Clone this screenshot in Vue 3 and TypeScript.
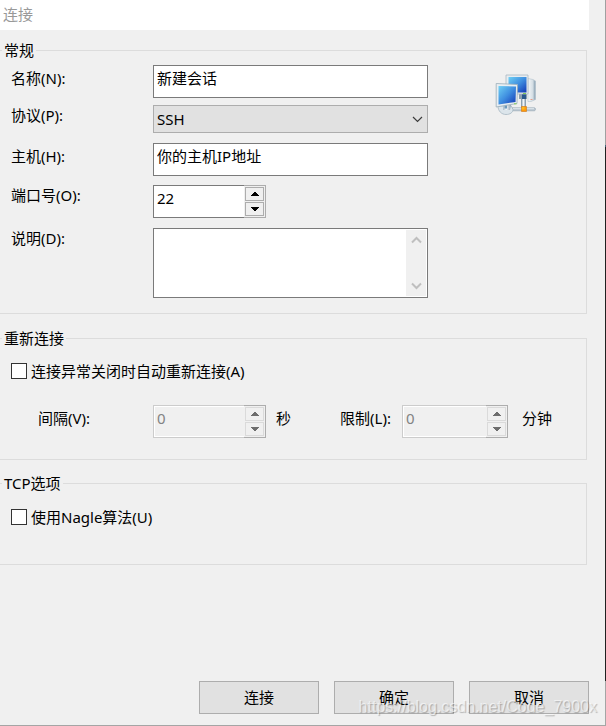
<script setup lang="ts">
import { ref } from 'vue'

const sessionName = ref('新建会话')
const protocol = ref('SSH')
const host = ref('你的主机IP地址')
const port = ref(22)
const description = ref('')
const autoReconnect = ref(false)
const interval = ref(0)
const limit = ref(0)
const useNagle = ref(false)

const protocols: string[] = ['SSH', 'TELNET', 'RLOGIN', 'SFTP', 'FTP', 'SERIAL']
const actions: string[] = ['连接', '确定', '取消']

function stepPort(delta: number): void {
  port.value = Math.min(65535, Math.max(1, port.value + delta))
}
function stepInterval(delta: number): void {
  interval.value = Math.max(0, interval.value + delta)
}
function stepLimit(delta: number): void {
  limit.value = Math.max(0, limit.value + delta)
}
</script>

<template>
  <div class="window">
    <main class="dialog">
      <header class="titlebar">连接</header>

      <form class="body" @submit.prevent>
        <fieldset class="group general">
          <legend>常规</legend>
          <div class="general-layout">
            <div class="fields">
              <div class="row row-text">
                <label for="name">名称(N):</label>
                <input id="name" v-model="sessionName" class="box" type="text" />
              </div>
              <div class="row row-select">
                <label for="protocol">协议(P):</label>
                <div class="select">
                  <select id="protocol" v-model="protocol">
                    <option v-for="p in protocols" :key="p">{{ p }}</option>
                  </select>
                  <svg width="11" height="7" viewBox="0 0 11 7" aria-hidden="true">
                    <path d="M1 1 5.500 5.500 10 1" fill="none" stroke="#3c3c3c" stroke-width="1.2" />
                  </svg>
                </div>
              </div>
              <div class="row row-text">
                <label for="host">主机(H):</label>
                <input id="host" v-model="host" class="box" type="text" />
              </div>
              <div class="row row-port">
                <label for="port">端口号(O):</label>
                <div class="spin">
                  <input id="port" v-model.number="port" type="text" inputmode="numeric" />
                  <div class="steps">
                    <button type="button" aria-label="增加" @click="stepPort(1)">
                      <svg width="8" height="4" viewBox="0 0 8 4"><path d="M3 0h2v1h1v1h1v1h1v1H0V3h1V2h1V1h1z" /></svg>
                    </button>
                    <button type="button" aria-label="减少" @click="stepPort(-1)">
                      <svg width="8" height="4" viewBox="0 0 8 4"><path d="M0 0h8v1H7v1H6v1H5v1H3V3H2V2H1V1H0z" /></svg>
                    </button>
                  </div>
                </div>
              </div>
              <div class="row">
                <label for="description">说明(D):</label>
                <div class="memo">
                  <textarea id="description" v-model="description"></textarea>
                  <div class="scroll" aria-hidden="true">
                    <svg width="11" height="8" viewBox="0 0 11 8"><path d="M1 6.500 5.500 2 10 6.500" /></svg>
                    <svg width="11" height="8" viewBox="0 0 11 8"><path d="M1 1.500 5.500 6 10 1.500" /></svg>
                  </div>
                </div>
              </div>
            </div>

            <svg class="network" width="42" height="42" viewBox="0 0 42 42" aria-hidden="true">
              <defs>
                <linearGradient id="screen" x1="0" y1="0" x2="1" y2="1">
                  <stop offset="0" stop-color="#6fd0f4" />
                  <stop offset="0.5" stop-color="#3f8ee0" />
                  <stop offset="1" stop-color="#1238b4" />
                </linearGradient>
                <linearGradient id="tower" x1="0" y1="0" x2="1" y2="0">
                  <stop offset="0" stop-color="#f4f7f9" />
                  <stop offset="0.65" stop-color="#d3dde4" />
                  <stop offset="1" stop-color="#7e97aa" />
                </linearGradient>
                <linearGradient id="stand" x1="0" y1="0" x2="1" y2="0">
                  <stop offset="0" stop-color="#a9bac7" />
                  <stop offset="0.4" stop-color="#f5f8fa" />
                  <stop offset="1" stop-color="#8da1b1" />
                </linearGradient>
              </defs>
              <path d="M33 4.500 38 5.500 40.500 7v18.500L36 27.500h-3z" fill="url(#tower)" stroke="#b4c2cc" stroke-width="0.6" />
              <path d="M35.500 25.500h2" stroke="#e69a86" />
              <path d="M24 19h8v6h-1v10h-5V25h-2z" fill="#8b9fb0" />
              <path d="M27 19h4v6h-4z" fill="#2a5a8c" />
              <path d="M27 25h3.500v11H27z" fill="url(#stand)" />
              <path d="M11 1h22v19H11z" fill="#e8edf0" stroke="#a9b8c3" stroke-width="0.8" />
              <path d="M13.500 3h18v15.500h-18z" fill="url(#screen)" />
              <path d="M28 19.500h3" stroke="#80cc53" />
              <path d="M17 33.800h22c1 0 1.500.5 1.500 1.400S40 36.800 39 36.800H17z" fill="#b9c6cf" stroke="#93a4b1" stroke-width="0.6" />
              <path d="M18 34.700h21" stroke="#edf2f5" stroke-width="0.8" />
              <path d="M26.500 32.500h5v5h-5z" fill="#ff9b0b" stroke="#cf781d" stroke-width="0.6" />
              <path d="M27 33h2.500v2.500H27z" fill="#ffba1c" />
              <path d="M3 32c0 5 3.500 8.500 8 8.500 4 0 7-2 7-5l-2-4z" fill="#dce5eb" stroke="#a6b6c1" stroke-width="0.8" />
              <path d="M8 31h8l-1 5H8z" fill="url(#stand)" />
              <path d="M9.500 31h2.500v3.500H9.500z" fill="#6d98ba" />
              <path d="M1.200 9.500 22.500 10.500 22 29.500 1.200 33z" fill="#e8eef2" stroke="#9badb9" stroke-width="0.8" />
              <path d="M3.500 12 21 12.500 20.500 28 3.500 30.500z" fill="url(#screen)" />
              <path d="M19 29.800h2.500" stroke="#80cc53" />
            </svg>
          </div>
        </fieldset>

        <fieldset class="group reconnect">
          <legend>重新连接</legend>
          <label class="check">
            <input v-model="autoReconnect" type="checkbox" />
            连接异常关闭时自动重新连接(A)
          </label>
          <div class="timing">
            <label class="interval-label" for="interval">间隔(V):</label>
            <div class="spin" :class="{ off: !autoReconnect }">
              <input id="interval" v-model.number="interval" type="text" inputmode="numeric" :disabled="!autoReconnect" />
              <div class="steps">
                <button type="button" aria-label="增加间隔" :disabled="!autoReconnect" @click="stepInterval(1)">
                  <svg width="8" height="4" viewBox="0 0 8 4"><path d="M3 0h2v1h1v1h1v1h1v1H0V3h1V2h1V1h1z" /></svg>
                </button>
                <button type="button" aria-label="减少间隔" :disabled="!autoReconnect" @click="stepInterval(-1)">
                  <svg width="8" height="4" viewBox="0 0 8 4"><path d="M0 0h8v1H7v1H6v1H5v1H3V3H2V2H1V1H0z" /></svg>
                </button>
              </div>
            </div>
            <span class="seconds">秒</span>
            <label class="limit-label" for="limit">限制(L):</label>
            <div class="spin narrow" :class="{ off: !autoReconnect }">
              <input id="limit" v-model.number="limit" type="text" inputmode="numeric" :disabled="!autoReconnect" />
              <div class="steps">
                <button type="button" aria-label="增加限制" :disabled="!autoReconnect" @click="stepLimit(1)">
                  <svg width="8" height="4" viewBox="0 0 8 4"><path d="M3 0h2v1h1v1h1v1h1v1H0V3h1V2h1V1h1z" /></svg>
                </button>
                <button type="button" aria-label="减少限制" :disabled="!autoReconnect" @click="stepLimit(-1)">
                  <svg width="8" height="4" viewBox="0 0 8 4"><path d="M0 0h8v1H7v1H6v1H5v1H3V3H2V2H1V1H0z" /></svg>
                </button>
              </div>
            </div>
            <span class="minutes">分钟</span>
          </div>
        </fieldset>

        <fieldset class="group tcp">
          <legend>TCP选项</legend>
          <label class="check">
            <input v-model="useNagle" type="checkbox" />
            使用Nagle算法(U)
          </label>
        </fieldset>

        <footer class="actions">
          <button v-for="a in actions" :key="a" type="button">{{ a }}</button>
        </footer>
      </form>
    </main>
    <div class="edge"></div>
    <div class="watermark">https://blog.csdn.net/Code_7900x</div>
  </div>
</template>

<style>
body {
  background: #f0f0f0;
}
</style>

<style scoped>
* {
  box-sizing: border-box;
}
.window {
  position: relative;
  display: flex;
  min-height: 100vh;
  background: #f0f0f0;
  color: #000;
  font: 15px/20px "Noto Sans", "Noto Sans CJK SC", sans-serif;
}
.dialog {
  flex: 1;
  min-width: 0;
  display: flex;
  flex-direction: column;
  border-bottom: 1px solid #a5a5a5;
}
.edge {
  width: 1px;
  background: linear-gradient(#a0a0a0 145px, #44657c 145px, #44657c 147px, #202020 147px, #202020 681px, #a5a5a5 681px);
}
.titlebar {
  height: 30px;
  margin-right: 16px;
  padding: 4px 3px;
  background: #fff;
  color: #999;
}
.body {
  flex: 1;
  display: flex;
  flex-direction: column;
  padding-top: 10px;
}
input,
select,
textarea,
button {
  margin: 0;
  padding: 0;
  font: inherit;
  color: inherit;
  border-radius: 0;
  outline: none;
}
.group {
  min-width: 0;
  margin: 0 18px 0 0;
  padding: 0;
  border: 1px solid #dcdcdc;
  border-left: 0;
}
legend {
  margin-left: 2px;
  padding: 0 2px;
}
.general {
  padding: 5px 0 15px;
}
.general-layout {
  display: flex;
}
.fields {
  flex: 1;
  min-width: 0;
}
.network {
  flex: none;
  margin: 9px 49px 0 67px;
}
.row {
  display: grid;
  grid-template-columns: 142px 1fr;
  margin: 10px 0 0 11px;
}
.row:first-child {
  margin-top: 0;
}
.row.row-select {
  margin-top: 7px;
}
.row.row-port {
  margin-top: 9px;
}
.row-text > label {
  padding-top: 3px;
}
.box {
  width: 100%;
  height: 33px;
  padding: 0 3px 8px;
  border: 1px solid #7a7a7a;
  background: #fff;
}
.select {
  display: grid;
  align-items: center;
}
.select select,
.select svg {
  grid-area: 1 / 1;
}
.select select {
  appearance: none;
  width: 100%;
  height: 28px;
  padding: 0 24px 0 3px;
  border: 1px solid #adadad;
  background: #e1e1e1;
}
.select svg {
  justify-self: end;
  margin-right: 5px;
  pointer-events: none;
}
.spin {
  display: flex;
  width: 113px;
  height: 33px;
}
.spin.narrow {
  width: 106px;
}
.spin input {
  flex: 1;
  min-width: 0;
  padding: 0 3px 8px;
  border: 1px solid #7a7a7a;
  border-right: 0;
  background: #fff;
}
.steps {
  display: flex;
  flex-direction: column;
  gap: 1px;
  width: 22px;
  padding: 1px;
  border: 1px solid #adadad;
  border-left: 0;
}
.steps button {
  flex: 1;
  display: flex;
  align-items: center;
  justify-content: center;
  border: 1px solid #adadad;
  background: #f0f0f0;
}
.steps svg {
  fill: #000;
}
.off input {
  border-color: #ccc;
  background: #f0f0f0;
  box-shadow: inset 1px 1px #fff, inset 0 -1px #fff;
  color: #838383;
}
.off .steps button {
  border-color: #dadada;
}
.off .steps svg {
  fill: #6d6d6d;
}
.memo {
  display: flex;
  height: 70px;
  padding: 1px;
  border: 1px solid #7a7a7a;
  background: #fff;
}
.memo textarea {
  flex: 1;
  min-width: 0;
  padding: 2px;
  border: 0;
  background: #fff;
  resize: none;
}
.scroll {
  display: flex;
  flex-direction: column;
  align-items: center;
  justify-content: space-between;
  width: 20px;
  padding: 6px 0;
  background: #f0f0f0;
}
.scroll path {
  fill: none;
  stroke: #bfbfbf;
  stroke-width: 2;
}
.reconnect {
  margin-top: 14px;
  padding: 13px 0 21px;
}
.check {
  display: flex;
  align-items: center;
  gap: 4px;
  width: fit-content;
  margin-left: 11px;
}
.check input {
  appearance: none;
  width: 16px;
  height: 16px;
  border: 1px solid #333;
  background: #fff;
}
.check input:checked {
  background: #333;
  box-shadow: inset 0 0 0 3px #fff;
}
.timing {
  display: flex;
  margin-top: 24px;
}
.timing > label,
.timing > span {
  padding-top: 3px;
  white-space: nowrap;
}
.interval-label {
  width: 153px;
  padding-left: 38px;
}
.seconds {
  margin-left: 10px;
}
.limit-label {
  width: 62px;
  margin-left: 49px;
}
.minutes {
  margin-left: 14px;
}
.tcp {
  margin-top: 13px;
  padding: 14px 0 37px;
}
.actions {
  display: flex;
  justify-content: flex-end;
  gap: 15px;
  margin-top: auto;
  padding: 20px 16px 11px 0;
}
.actions button {
  width: 120px;
  height: 33px;
  padding-bottom: 2px;
  border: 1px solid #adadad;
  background: #e1e1e1;
}
.watermark {
  position: absolute;
  right: 9px;
  bottom: 9px;
  color: rgba(255, 255, 255, 0.6);
  font: 16px/20px "Liberation Sans", sans-serif;
  text-shadow: 1px 1px 1px rgba(0, 0, 0, 0.25);
  pointer-events: none;
}
</style>
